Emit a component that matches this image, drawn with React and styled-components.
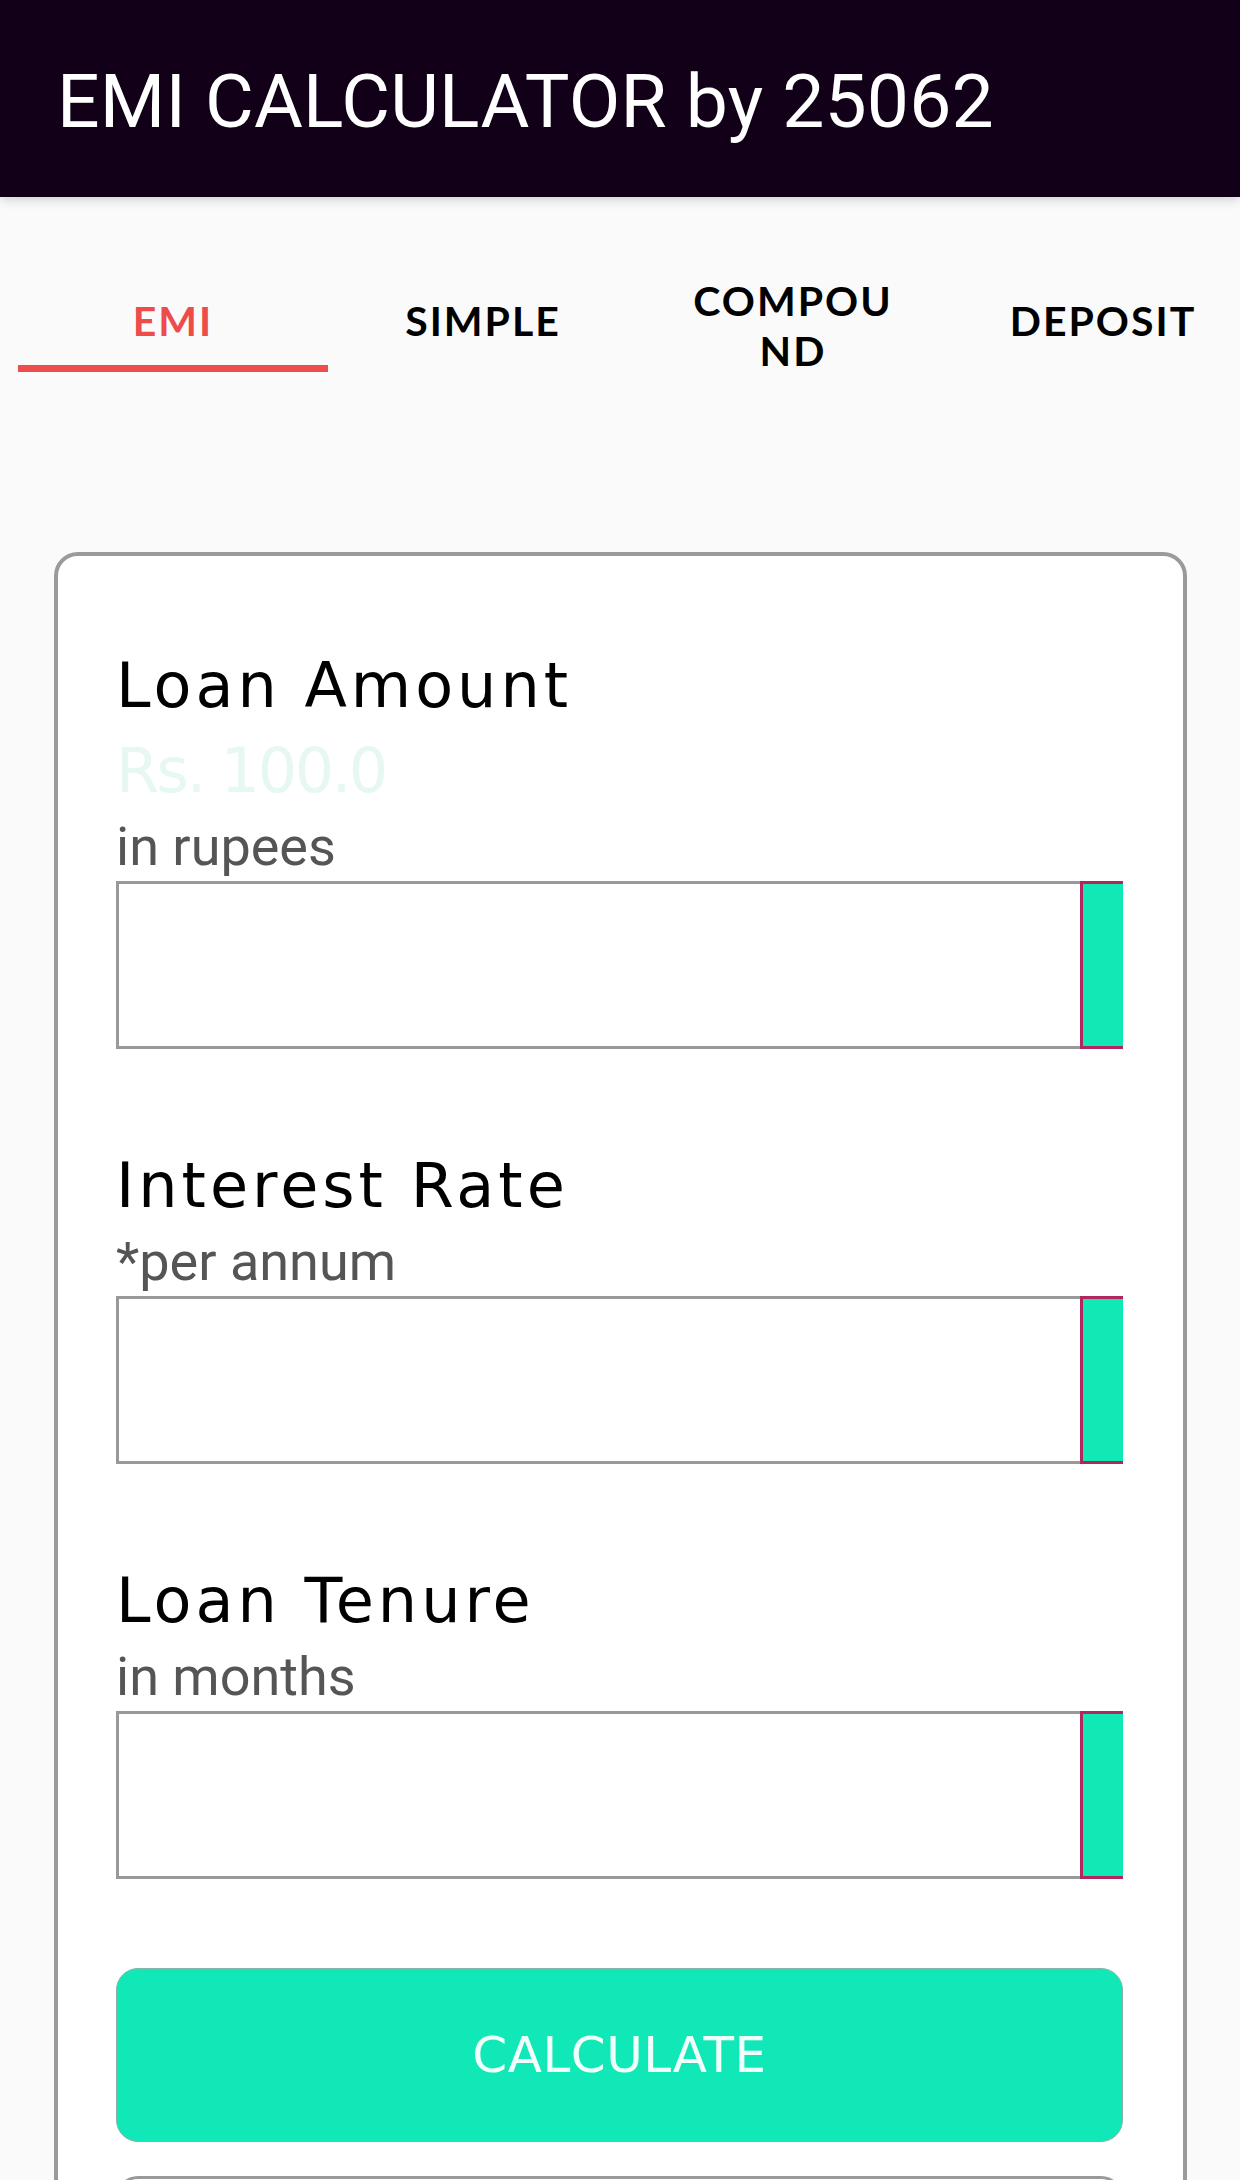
import React from "react";
import styled, { createGlobalStyle } from "styled-components";

const GlobalStyle = createGlobalStyle`
  html, body { margin: 0; padding: 0; background: #fafafa; }
  body { font-family: Roboto, "Liberation Sans", Arial, sans-serif; }
  * { box-sizing: border-box; }
`;

const Page = styled.div`
  width: 1240px;
  min-height: 2180px;
  background: #fafafa;
  overflow: hidden;
`;

const AppBar = styled.header`
  position: relative;
  z-index: 1;
  height: 197px;
  padding: 64px 0 0 57px;
  background: #110017;
  box-shadow: 0 3px 10px rgba(0, 0, 0, 0.16);
`;

const Title = styled.h1`
  margin: 0;
  font-family: Roboto, "Liberation Sans", Arial, sans-serif;
  font-weight: 400;
  font-size: 75px;
  line-height: 75px;
  letter-spacing: 0.2px;
  color: #ffffff;
  white-space: nowrap;
`;

const TabRow = styled.nav`
  display: flex;
  padding: 79px 0 0 18px;
`;

const Tab = styled.div`
  flex: 0 0 310px;
  height: 96px;
  display: flex;
  flex-direction: column;
`;

const TabLabel = styled.div`
  flex: 1;
  display: flex;
  align-items: center;
  justify-content: center;
  text-align: center;
  font-family: Lato, "DejaVu Sans", sans-serif;
  font-weight: 700;
  font-size: 41px;
  line-height: 50px;
  letter-spacing: 2px;
  color: ${(p) => (p.$active ? "#ee4b4b" : "#000000")};
`;

const Indicator = styled.div`
  height: 7px;
  background: ${(p) => (p.$active ? "#ef4c4c" : "transparent")};
`;

const Card = styled.section`
  margin: 180px 53px 0 54px;
  padding: 99px 60px 60px 58px;
  background: #ffffff;
  border: 4px solid #9a9a9a;
  border-radius: 24px;
`;

const Field = styled.div`
  & + & {
    margin-top: 106px;
  }
`;

const FieldLabel = styled.div`
  font-family: "DejaVu Sans", Verdana, sans-serif;
  font-size: 62px;
  line-height: 62px;
  letter-spacing: 4px;
  color: #000000;
`;

const Amount = styled.div`
  margin-top: 23px;
  font-family: "DejaVu Sans", Verdana, sans-serif;
  font-size: 62px;
  line-height: 62px;
  letter-spacing: -2.5px;
  color: #e6f8f1;
`;

const Hint = styled.div`
  margin-top: 18px;
  font-family: Roboto, "Liberation Sans", Arial, sans-serif;
  font-size: 54px;
  line-height: 54px;
  color: #555555;
`;

const InputRow = styled.div`
  display: flex;
  height: 168px;
  margin-top: 7px;
`;

const TextInput = styled.input`
  flex: 1;
  min-width: 0;
  height: 100%;
  margin: 0;
  padding: 0 20px;
  background: #ffffff;
  border: 3px solid #999999;
  border-right: none;
  border-radius: 0;
  outline: none;
  font-family: Roboto, sans-serif;
  font-size: 50px;
`;

const SideTab = styled.div`
  flex: 0 0 43px;
  height: 100%;
  background: #10e8b6;
  border: 3px solid #b0275e;
  border-right: none;
`;

const PrimaryButton = styled.button`
  display: block;
  width: 100%;
  height: 174px;
  margin-top: 89px;
  background: #10e8b7;
  border: 1px solid #86b4a8;
  border-radius: 22px;
  font-family: "DejaVu Sans", Verdana, sans-serif;
  font-size: 50px;
  letter-spacing: 0.5px;
  color: #effff9;
  cursor: pointer;
`;

const SecondaryBox = styled.div`
  height: 174px;
  margin-top: 34px;
  background: #ffffff;
  border: 3px solid #9a9a9a;
  border-radius: 22px;
`;

const tabs = [
  { key: "emi", label: "EMI", active: true },
  { key: "simple", label: "SIMPLE" },
  { key: "compound", label: ["COMPOU", "ND"] },
  { key: "deposit", label: "DEPOSIT" },
];

const fields = [
  { key: "amount", label: "Loan Amount", amount: "Rs. 100.0", hint: "in rupees" },
  { key: "rate", label: "Interest Rate", hint: "*per annum" },
  { key: "tenure", label: "Loan Tenure", hint: "in months" },
];

export default function App() {
  return (
    <Page>
      <GlobalStyle />
      <AppBar>
        <Title>EMI CALCULATOR by 25062</Title>
      </AppBar>
      <TabRow>
        {tabs.map((t) => (
          <Tab key={t.key}>
            <TabLabel $active={t.active}>
              {Array.isArray(t.label) ? (
                <span>
                  {t.label[0]}
                  <br />
                  {t.label[1]}
                </span>
              ) : (
                t.label
              )}
            </TabLabel>
            <Indicator $active={t.active} />
          </Tab>
        ))}
      </TabRow>
      <Card>
        {fields.map((f) => (
          <Field key={f.key}>
            <FieldLabel>{f.label}</FieldLabel>
            {f.amount && <Amount>{f.amount}</Amount>}
            <Hint>{f.hint}</Hint>
            <InputRow>
              <TextInput type="text" aria-label={f.label} />
              <SideTab />
            </InputRow>
          </Field>
        ))}
        <PrimaryButton type="button">CALCULATE</PrimaryButton>
        <SecondaryBox />
      </Card>
    </Page>
  );
}
